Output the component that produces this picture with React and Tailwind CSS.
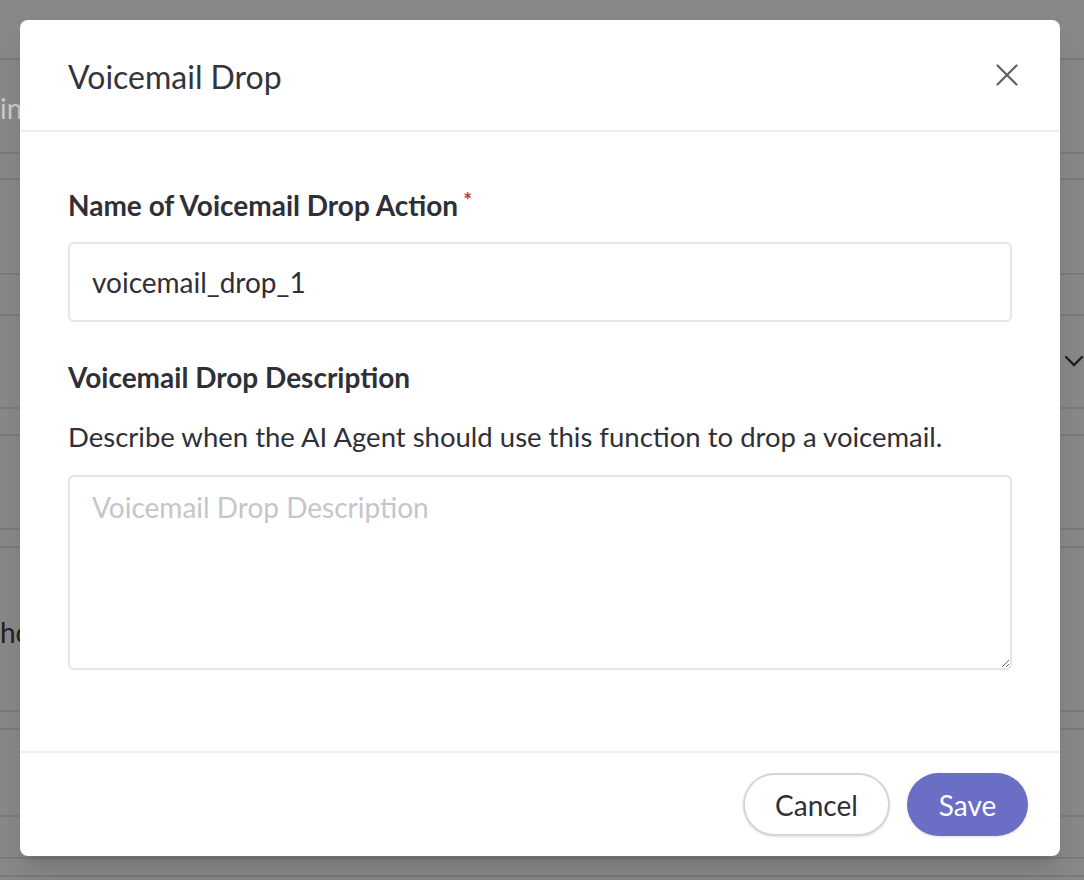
import React, { useState } from "react";

const rows = [60, 94, 26, 95, 41, 93, 27, 94, 18, 164, 18, 87, 42, 18];

function BackgroundPage() {
  return (
    <div className="h-[880px] w-full overflow-hidden bg-white">
      {rows.map((h, i) => (
        <div
          key={i}
          style={{ height: h }}
          className="relative border-b-2 border-[#e6e6e6]"
        />
      ))}
    </div>
  );
}

function CloseIcon() {
  return (
    <svg width="22" height="22" viewBox="0 0 22 22" fill="none">
      <path
        d="M1.5 1.5L20.5 20.5M20.5 1.5L1.5 20.5"
        stroke="#5f5f69"
        strokeWidth="2.2"
        strokeLinecap="round"
      />
    </svg>
  );
}

export default function App() {
  const [name, setName] = useState("voicemail_drop_1");
  const [desc, setDesc] = useState("");

  return (
    <div
      className="relative h-[880px] w-[1084px] overflow-hidden"
      style={{ fontFamily: "Lato, 'Noto Sans', sans-serif" }}
    >
      <BackgroundPage />

      <div className="absolute inset-0 bg-black/[0.47] p-5">
        {/* underlying page bits peeking out */}
        <span className="absolute left-0 top-[92px] text-[28px] leading-[32px] text-[#c8c8c8]">in</span>
        <span className="absolute left-0 top-[616px] text-[28px] leading-[32px] text-[#222]">ho</span>
        <svg className="absolute right-[0px] top-[352px]" width="20" height="20" viewBox="0 0 20 20" fill="none">
          <path d="M2 5L10 13L18 5" stroke="#1f1f1f" strokeWidth="2.4" strokeLinecap="round" />
        </svg>

        <div className="relative flex h-[836px] w-[1040px] flex-col rounded-lg bg-white shadow-xl">
          <div className="flex h-[112px] shrink-0 items-center justify-between border-b-2 border-[#efeff2] pl-12 pr-[38px]">
            <h2 className="pt-1 text-[32px] leading-[40px] text-[#34343c]">Voicemail Drop</h2>
            <button className="p-1">
              <CloseIcon />
            </button>
          </div>

          <div className="flex flex-1 flex-col px-12 pt-[57px]">
            <label className="text-[28px] font-bold leading-[32px] text-[#2f3037]">
              Name of Voicemail Drop Action
              <sup className="relative -top-[8px] ml-[5px] text-[21px] font-bold text-[#c62f2f]">*</sup>
            </label>
            <input
              value={name}
              onChange={(e) => setName(e.target.value)}
              className="mt-[21px] h-[80px] w-full rounded-md border-2 border-[#e4e4ea] px-[22px] text-[28px] text-[#2f3037] outline-none"
            />

            <label className="mt-[39px] text-[28px] font-bold leading-[32px] text-[#2f3037]">
              Voicemail Drop Description
            </label>
            <p className="mt-[28px] text-[27.5px] leading-[32px] text-[#2f3037]">
              Describe when the AI Agent should use this function to drop a voicemail.
            </p>
            <textarea
              value={desc}
              onChange={(e) => setDesc(e.target.value)}
              placeholder="Voicemail Drop Description"
              className="mt-[22px] h-[195px] w-full rounded-md border-2 border-[#e4e4ea] px-[22px] py-[14px] text-[28px] leading-[32px] text-[#2f3037] outline-none placeholder:text-[#c5c5cc]"
            />
          </div>

          <div className="flex h-[105px] shrink-0 items-center justify-end gap-[17px] border-t-2 border-[#efeff2] pr-8">
            <button className="h-[63px] w-[147px] rounded-full border-2 border-[#d6d6d9] bg-white text-[28px] text-[#2f3037] shadow-sm">
              Cancel
            </button>
            <button className="h-[63px] w-[121px] rounded-full bg-[#6a6ec5] text-[28px] text-white shadow-sm">
              Save
            </button>
          </div>
        </div>
      </div>
    </div>
  );
}
